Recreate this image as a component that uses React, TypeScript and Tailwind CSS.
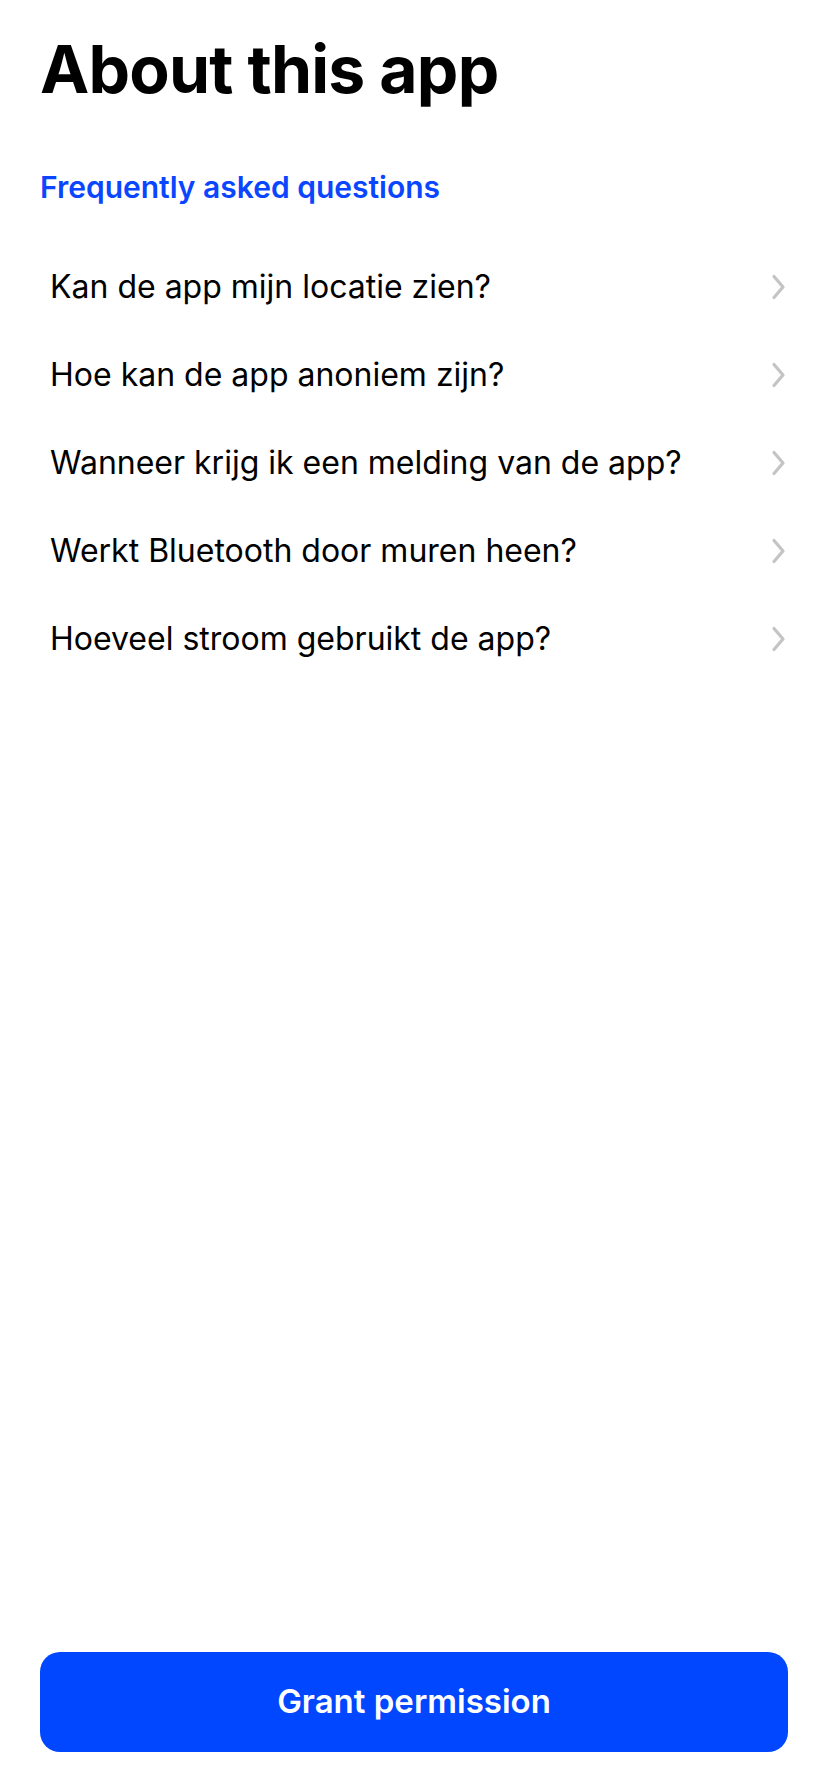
import React from "react";

const items = [
  "Kan de app mijn locatie zien?",
  "Hoe kan de app anoniem zijn?",
  "Wanneer krijg ik een melding van de app?",
  "Werkt Bluetooth door muren heen?",
  "Hoeveel stroom gebruikt de app?",
];

function Chevron() {
  return (
    <svg width="16" height="26" viewBox="0 0 16 26" fill="none">
      <path d="M4 2.5 L13 13 L4 23.5" stroke="#c4c4c7" strokeWidth="3.2" strokeLinecap="round" strokeLinejoin="round" />
    </svg>
  );
}

export default function App() {
  return (
    <div
      className="flex min-h-screen w-full flex-col bg-white px-[40px]"
      style={{ fontFamily: "Inter, 'Noto Sans', sans-serif" }}
    >
      <h1 className="mt-[28px] text-[66px] font-bold leading-[82px] tracking-[-0.8px] text-black">
        About this app
      </h1>
      <h2 className="mt-[57px] text-[30px] font-semibold leading-[40px] text-[#0a46ff]">
        Frequently asked questions
      </h2>
      <div className="mt-[36px] flex flex-col">
        {items.map((t) => (
          <div key={t} className="flex h-[88px] items-center justify-between pl-[10px] pr-[2px]">
            <span className="text-[32px] leading-[40px] text-black">{t}</span>
            <Chevron />
          </div>
        ))}
      </div>
      <div className="flex-1" />
      <button className="mb-[40px] h-[100px] w-full rounded-[20px] bg-[#0047ff] text-[33px] font-semibold text-white">
        Grant permission
      </button>
    </div>
  );
}
